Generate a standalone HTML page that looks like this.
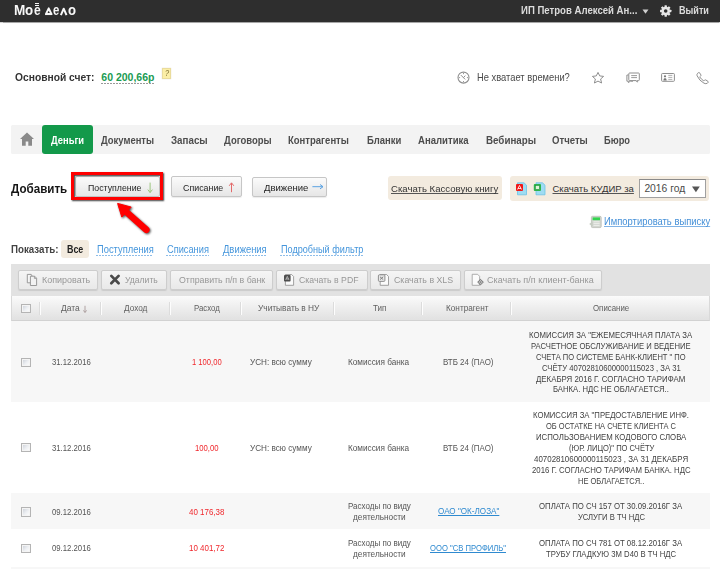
<!DOCTYPE html>
<html><head><meta charset="utf-8"><title>Моё дело</title>
<style>
html,body{margin:0;padding:0;background:#fff;width:720px;height:569px;overflow:hidden;position:relative;font-family:"Liberation Sans", sans-serif;}
.t{position:absolute;white-space:nowrap;text-decoration-skip-ink:none;}
</style></head><body>
<div style="position:absolute;left:0px;top:0px;width:720px;height:21.5px;background:#2e2e2e;box-shadow:0 0.5px 1px rgba(0,0,0,.35)"></div>
<div class="t" style="left:14.03px;top:3.10px;font-size:14px;line-height:14px;font-weight:700;color:#f7f7f7;letter-spacing:0px;transform:scaleX(0.9700);transform-origin:0 0;">М</div>
<div class="t" style="left:25.30px;top:3.10px;font-size:14px;line-height:14px;font-weight:700;color:#f7f7f7;letter-spacing:0px;transform:scaleX(0.9500);transform-origin:0 0;">о</div>
<div class="t" style="left:33.80px;top:3.10px;font-size:14px;line-height:14px;font-weight:700;color:#f7f7f7;letter-spacing:0px;transform:scaleX(0.8625);transform-origin:0 0;">е</div>
<div style="position:absolute;left:35.1px;top:3.1px;width:4px;height:1.1px;background:#f7f7f7"></div>
<div style="position:absolute;left:35.1px;top:5.2px;width:4px;height:1.1px;background:#f7f7f7"></div>
<svg style="position:absolute;left:42px;top:0" width="36" height="20" viewBox="42 0 36 20"><path d="M48.7 8.3 L46 14 L51.4 14 Z" fill="none" stroke="#f7f7f7" stroke-width="1.9" stroke-linejoin="round"/><path d="M45.1 14.4 H52.3" stroke="#f7f7f7" stroke-width="1.3"/><path d="M60.9 15.1 L63.7 8.7 L66.5 15.1" fill="none" stroke="#f7f7f7" stroke-width="2" stroke-linejoin="round"/></svg>
<div class="t" style="left:52.75px;top:3.10px;font-size:14px;line-height:14px;font-weight:700;color:#f7f7f7;letter-spacing:0px;transform:scaleX(0.8125);transform-origin:0 0;">е</div>
<div class="t" style="left:67.50px;top:3.10px;font-size:14px;line-height:14px;font-weight:700;color:#f7f7f7;letter-spacing:0px;transform:scaleX(0.9375);transform-origin:0 0;">о</div>
<div class="t" style="left:521.00px;top:6.00px;font-size:10px;line-height:10px;font-weight:700;color:#dcdcdc;letter-spacing:0px;transform:scaleX(0.9587);transform-origin:0 0;">ИП Петров Алексей Ан...</div>
<svg style="position:absolute;left:642px;top:9px" width="7" height="5" viewBox="0 0 7 5"><path d="M0.5 0.5 L6.5 0.5 L3.5 4.7 Z" fill="#cfcfcf"/></svg>
<svg style="position:absolute;left:658px;top:3px" width="16" height="16" viewBox="658 3 16 16"><g transform="translate(665.7 11)"><circle r="4.3" fill="#e6e6e6"/><rect x="-1.2" y="-5.7" width="2.4" height="2.4" rx="0.4" fill="#e6e6e6" transform="rotate(0)"/><rect x="-1.2" y="-5.7" width="2.4" height="2.4" rx="0.4" fill="#e6e6e6" transform="rotate(45)"/><rect x="-1.2" y="-5.7" width="2.4" height="2.4" rx="0.4" fill="#e6e6e6" transform="rotate(90)"/><rect x="-1.2" y="-5.7" width="2.4" height="2.4" rx="0.4" fill="#e6e6e6" transform="rotate(135)"/><rect x="-1.2" y="-5.7" width="2.4" height="2.4" rx="0.4" fill="#e6e6e6" transform="rotate(180)"/><rect x="-1.2" y="-5.7" width="2.4" height="2.4" rx="0.4" fill="#e6e6e6" transform="rotate(225)"/><rect x="-1.2" y="-5.7" width="2.4" height="2.4" rx="0.4" fill="#e6e6e6" transform="rotate(270)"/><rect x="-1.2" y="-5.7" width="2.4" height="2.4" rx="0.4" fill="#e6e6e6" transform="rotate(315)"/><circle r="1.8" fill="#2e2e2e"/></g></svg>
<div class="t" style="left:679.40px;top:6.00px;font-size:10px;line-height:10px;font-weight:700;color:#dcdcdc;letter-spacing:0px;transform:scaleX(0.9091);transform-origin:0 0;">Выйти</div>
<div class="t" style="left:15.00px;top:71.75px;font-size:10.5px;line-height:10.5px;font-weight:700;color:#333;letter-spacing:0px;transform:scaleX(0.9778);transform-origin:0 0;">Основной счет:</div>
<div class="t" style="left:101.30px;top:71.90px;font-size:10.5px;line-height:10.5px;font-weight:700;color:#1a9b52;letter-spacing:0px;">60 200,66р</div>
<div style="position:absolute;left:101px;top:83px;width:54px;height:1px;background:repeating-linear-gradient(90deg,#9a9a9a 0 2px,transparent 2px 3px)"></div>
<div style="position:absolute;left:161.7px;top:68.2px;width:9.3px;height:10.4px;background:#fbeea6;border:1px solid #eadc9c;box-sizing:border-box;box-shadow:0 0 1px rgba(150,130,60,.3)"></div>
<div class="t" style="left:164.70px;top:69.40px;font-size:9px;line-height:9px;font-weight:400;color:#85763a;letter-spacing:0px;transform:scaleX(0.8200);transform-origin:0 0;font-style:italic">?</div>
<svg style="position:absolute;left:454px;top:69px" width="20" height="18" viewBox="454 69 20 18"><circle cx="463.5" cy="77.6" r="5.5" fill="none" stroke="#8f8f8f" stroke-width="1.1"/><path d="M463.5 73 V74.2 M463.5 81 V82.2 M458.9 77.6 H460.1 M466.9 77.6 H468.1" stroke="#8f8f8f" stroke-width="0.9"/><path d="M460.9 75.1 L465.2 79.4 M463.5 77.6 L465.3 75.6" stroke="#8f8f8f" stroke-width="1"/></svg>
<div class="t" style="left:476.90px;top:72.80px;font-size:10.4px;line-height:10.4px;font-weight:400;color:#4a4a4a;letter-spacing:0px;transform:scaleX(0.9000);transform-origin:0 0;">Не хватает времени?</div>
<svg style="position:absolute;left:588px;top:69px" width="20" height="18" viewBox="588 69 20 18"><path d="M598 72.4 L599.7 75.9 L603.6 76.4 L600.6 79 L601.6 83 L598 81.1 L594.4 83 L595.4 79 L592.4 76.4 L596.3 75.9 Z" fill="none" stroke="#8f8f8f" stroke-width="1" stroke-linejoin="round"/></svg>
<svg style="position:absolute;left:622px;top:69px" width="22" height="18" viewBox="622 69 22 18"><path d="M628.6 75 H626.9 V81.2 L628.4 81.2 L628.4 82.6 L630.3 81.2 H633" fill="none" stroke="#8f8f8f" stroke-width="1"/><rect x="628.8" y="73" width="10.5" height="7.6" rx="0.8" fill="#fff" stroke="#8f8f8f" stroke-width="1"/><path d="M631.2 75.6 H637 M631.2 77.6 H637" stroke="#8f8f8f" stroke-width="0.9"/><path d="M635.8 80.6 L637.4 82.2 L637.4 80.6" fill="#fff" stroke="#8f8f8f" stroke-width="0.9"/></svg>
<svg style="position:absolute;left:658px;top:69px" width="22" height="18" viewBox="658 69 22 18"><rect x="661.6" y="73.5" width="12.8" height="7.8" rx="0.8" fill="none" stroke="#8f8f8f" stroke-width="1"/><circle cx="665" cy="76.3" r="1.1" fill="#777"/><path d="M663.3 80.6 Q663.5 77.9 665 77.9 Q666.6 77.9 666.7 80.6 Z" fill="#777"/><path d="M668.3 75.4 H672.3 M668.3 77.4 H672.3 M668.3 79.4 H672.3" stroke="#9a9a9a" stroke-width="0.8"/></svg>
<svg style="position:absolute;left:692px;top:69px" width="20" height="18" viewBox="692 69 20 18"><path d="M697.6 73.3 Q698.5 72.3 699.4 72.6 L700.9 74.9 Q701.2 75.6 700.4 76.3 L699.7 76.9 Q701.5 79.6 703.8 80.9 L704.5 80.2 Q705.2 79.6 705.9 80 L708.1 81.5 Q708.5 82.4 707.4 83.2 Q706 84.2 704 83.2 Q699.4 80.8 697.1 75.8 Q696.6 74.3 697.6 73.3 Z" fill="none" stroke="#8f8f8f" stroke-width="1" stroke-linejoin="round"/></svg>
<div style="position:absolute;left:11px;top:125.2px;width:698.6px;height:28.8px;background:#f3f3f3;border-radius:1.5px"></div>
<svg style="position:absolute;left:19px;top:132px" width="16" height="14" viewBox="0 0 16 14"><path d="M8 0.6 L15 7 L13 7 L13 13.8 L9.3 13.8 L9.3 9.5 L6.7 9.5 L6.7 13.8 L3 13.8 L3 7 L1 7 Z" fill="#8a8a8a"/></svg>
<div style="position:absolute;left:42px;top:125px;width:50.5px;height:29.25px;background:#13994a;border-radius:3px"></div>
<div class="t" style="left:51.00px;top:135.25px;font-size:10.5px;line-height:10.5px;font-weight:700;color:#ffffff;letter-spacing:0px;transform:scaleX(0.8919);transform-origin:0 0;">Деньги</div>
<div class="t" style="left:101.20px;top:134.90px;font-size:10.5px;line-height:10.5px;font-weight:700;color:#4d4d4d;letter-spacing:0px;transform:scaleX(0.8983);transform-origin:0 0;">Документы</div>
<div class="t" style="left:171.00px;top:134.90px;font-size:10.5px;line-height:10.5px;font-weight:700;color:#4d4d4d;letter-spacing:0px;transform:scaleX(0.9308);transform-origin:0 0;">Запасы</div>
<div class="t" style="left:224.00px;top:134.90px;font-size:10.5px;line-height:10.5px;font-weight:700;color:#4d4d4d;letter-spacing:0px;transform:scaleX(0.9038);transform-origin:0 0;">Договоры</div>
<div class="t" style="left:288.30px;top:134.90px;font-size:10.5px;line-height:10.5px;font-weight:700;color:#4d4d4d;letter-spacing:0px;transform:scaleX(0.9060);transform-origin:0 0;">Контрагенты</div>
<div class="t" style="left:366.70px;top:134.90px;font-size:10.5px;line-height:10.5px;font-weight:700;color:#4d4d4d;letter-spacing:0px;transform:scaleX(0.9026);transform-origin:0 0;">Бланки</div>
<div class="t" style="left:417.50px;top:134.90px;font-size:10.5px;line-height:10.5px;font-weight:700;color:#4d4d4d;letter-spacing:0px;transform:scaleX(0.9107);transform-origin:0 0;">Аналитика</div>
<div class="t" style="left:485.70px;top:134.90px;font-size:10.5px;line-height:10.5px;font-weight:700;color:#4d4d4d;letter-spacing:0px;transform:scaleX(0.9302);transform-origin:0 0;">Вебинары</div>
<div class="t" style="left:551.70px;top:134.90px;font-size:10.5px;line-height:10.5px;font-weight:700;color:#4d4d4d;letter-spacing:0px;transform:scaleX(0.9128);transform-origin:0 0;">Отчеты</div>
<div class="t" style="left:604.30px;top:134.90px;font-size:10.5px;line-height:10.5px;font-weight:700;color:#4d4d4d;letter-spacing:0px;transform:scaleX(0.8862);transform-origin:0 0;">Бюро</div>
<div class="t" style="left:10.50px;top:183.00px;font-size:12.5px;line-height:12.5px;font-weight:700;color:#151515;letter-spacing:0px;transform:scaleX(0.9292);transform-origin:0 0;">Добавить</div>
<div style="position:absolute;left:74.5px;top:175.5px;width:85.5px;height:21px;background:linear-gradient(#fbfbfb,#e6e6e6);border:1px solid #c6c6c6;box-sizing:border-box;border-radius:2px;box-shadow:0 1px 1px rgba(0,0,0,.08)"></div>
<div class="t" style="left:87.50px;top:183.90px;font-size:9.3px;line-height:9.3px;font-weight:400;color:#252525;letter-spacing:0px;transform:scaleX(0.9430);transform-origin:0 0;">Поступление</div>
<svg style="position:absolute;left:145px;top:180px" width="10" height="15" viewBox="145 180 10 15"><path d="M150.1 182.6 V192.4 M147.8 189.6 L150.1 192.6 L152.4 189.6" fill="none" stroke="#9cc77e" stroke-width="1"/></svg>
<div style="position:absolute;left:70.75px;top:172px;width:92.5px;height:27.5px;border:3.2px solid #f00;box-sizing:border-box;box-shadow:1px 1px 1.5px rgba(0,0,0,.75), inset 1px 1px 1.5px rgba(0,0,0,.75)"></div>
<div style="position:absolute;left:171px;top:176.25px;width:71.4px;height:21.05px;background:linear-gradient(#fbfbfb,#e6e6e6);border:1px solid #c6c6c6;box-sizing:border-box;border-radius:2px;box-shadow:0 1px 1px rgba(0,0,0,.08)"></div>
<div class="t" style="left:183.00px;top:183.90px;font-size:9.3px;line-height:9.3px;font-weight:400;color:#252525;letter-spacing:0px;transform:scaleX(0.9524);transform-origin:0 0;">Списание</div>
<svg style="position:absolute;left:226px;top:180px" width="10" height="15" viewBox="226 180 10 15"><path d="M231.5 183 V192.2 M229.2 185.8 L231.5 182.8 L233.8 185.8" fill="none" stroke="#e36a6a" stroke-width="1"/></svg>
<div style="position:absolute;left:252.3px;top:176.5px;width:74.9px;height:20.8px;background:linear-gradient(#fbfbfb,#e6e6e6);border:1px solid #c6c6c6;box-sizing:border-box;border-radius:2px;box-shadow:0 1px 1px rgba(0,0,0,.08)"></div>
<div class="t" style="left:264.30px;top:183.90px;font-size:9.3px;line-height:9.3px;font-weight:400;color:#252525;letter-spacing:0px;transform:scaleX(1.0233);transform-origin:0 0;">Движение</div>
<svg style="position:absolute;left:310px;top:182px" width="16" height="10" viewBox="310 182 16 10"><path d="M312.4 186.7 H322.8 M320 184.5 L323 186.7 L320 188.9" fill="none" stroke="#5aa2e2" stroke-width="1"/></svg>
<svg style="position:absolute;left:108px;top:196px;filter:drop-shadow(1.2px 1.2px 1px rgba(0,0,0,.7))" width="50" height="45" viewBox="108 196 50 45"><path d="M126.5 212.1 L146.3 229.8" stroke="#f00" stroke-width="6.6" stroke-linecap="round"/><path d="M117.6 203.4 L131.2 207.1 L121.8 217.1 Z" fill="#f00" stroke="#f00" stroke-width="1" stroke-linejoin="round"/></svg>
<div style="position:absolute;left:387.5px;top:176px;width:114.25px;height:23.75px;background:#f3ebdf;border-radius:3px"></div>
<div class="t" style="left:391.25px;top:184.00px;font-size:9.5px;line-height:9.5px;font-weight:400;color:#333;letter-spacing:0px;transform:scaleX(1.0094);transform-origin:0 0;text-decoration:underline #555">Скачать Кассовую книгу</div>
<div style="position:absolute;left:509.5px;top:176.2px;width:199.4px;height:24.6px;background:#f3ebdf;border-radius:3px"></div>
<svg style="position:absolute;left:515px;top:182px" width="13" height="14" viewBox="0 0 13 14"><path d="M2.5 0.8 H9 L11.5 3.2 V12.8 H2.5 Z" fill="#9fdcf2" stroke="#6cc3e6" stroke-width="0.8"/><rect x="1" y="2" width="7" height="7" rx="1" fill="#f01818"/><path d="M4.5 3.5 L6.5 7.5 M4.5 3.5 L2.5 7.5 M3 6.5 H6" stroke="#fff" stroke-width="0.8"/></svg>
<svg style="position:absolute;left:533px;top:182px" width="13" height="14" viewBox="0 0 13 14"><path d="M3 0.8 H9.5 L12 3.2 V12.8 H3 Z" fill="#9fdcf2" stroke="#6cc3e6" stroke-width="0.8"/><rect x="0.8" y="2" width="7.2" height="7" rx="1" fill="#2fb34a"/><rect x="2.3" y="3.5" width="4.2" height="4" fill="#dff5d8" stroke="#1f8f3a" stroke-width="0.6"/></svg>
<div class="t" style="left:552.50px;top:184.00px;font-size:9.5px;line-height:9.5px;font-weight:400;color:#333;letter-spacing:0px;text-decoration:underline #555">Скачать КУДИР за</div>
<div style="position:absolute;left:639.3px;top:179.1px;width:66.7px;height:19.3px;background:#fff;border:1px solid #a0a0a0;border-top-color:#8a8a8a;box-sizing:border-box"></div>
<div class="t" style="left:644.40px;top:184.40px;font-size:10.3px;line-height:10.3px;font-weight:400;color:#4a4a4a;letter-spacing:0px;">2016 год</div>
<svg style="position:absolute;left:690px;top:184px" width="12" height="10" viewBox="690 184 12 10"><path d="M692 186.4 H699.8 L695.9 192.3 Z" fill="#555"/></svg>
<svg style="position:absolute;left:587px;top:214px" width="16" height="16" viewBox="587 214 16 16"><rect x="591.4" y="216.3" width="9.8" height="11.3" rx="1.2" fill="#d3d6d0" stroke="#b9bdb5" stroke-width="0.8"/><rect x="592.6" y="217.4" width="7.4" height="2.8" fill="#33d44f"/><path d="M593.5 221.8 H599.6 M593.5 223.6 H599.6 M593.5 225.4 H599.6" stroke="#eef0ec" stroke-width="0.9"/><path d="M589.2 224 L592.6 221.6 L592.6 226.4 Z" fill="#c4cbc0"/></svg>
<div class="t" style="left:603.66px;top:216.90px;font-size:10px;line-height:10px;font-weight:400;color:#4590d8;letter-spacing:0px;transform:scaleX(0.9411);transform-origin:0 0;text-decoration:underline #80b3e6">Импортировать выписку</div>
<div class="t" style="left:11.10px;top:244.90px;font-size:10px;line-height:10px;font-weight:700;color:#444;letter-spacing:0px;transform:scaleX(0.9729);transform-origin:0 0;">Показать:</div>
<div style="position:absolute;left:61px;top:240.4px;width:27.75px;height:18.1px;background:#f3ebdf;border-radius:3px"></div>
<div class="t" style="left:66.70px;top:243.50px;font-size:10.5px;line-height:10.5px;font-weight:700;color:#222;letter-spacing:0px;transform:scaleX(0.8474);transform-origin:0 0;">Все</div>
<div class="t" style="left:96.70px;top:244.90px;font-size:10px;line-height:10px;font-weight:400;color:#4596dc;letter-spacing:0px;transform:scaleX(0.9350);transform-origin:0 0;">Поступления</div>
<div style="position:absolute;left:96.2px;top:255px;width:57.1px;height:1px;background:repeating-linear-gradient(90deg,#8dbde9 0 2px,transparent 2px 3px)"></div>
<div class="t" style="left:166.70px;top:244.90px;font-size:10px;line-height:10px;font-weight:400;color:#4596dc;letter-spacing:0px;transform:scaleX(0.9244);transform-origin:0 0;">Списания</div>
<div style="position:absolute;left:166.2px;top:255px;width:42.6px;height:1px;background:repeating-linear-gradient(90deg,#8dbde9 0 2px,transparent 2px 3px)"></div>
<div class="t" style="left:222.80px;top:244.90px;font-size:10px;line-height:10px;font-weight:400;color:#4596dc;letter-spacing:0px;transform:scaleX(0.9413);transform-origin:0 0;">Движения</div>
<div style="position:absolute;left:222.3px;top:255px;width:44.3px;height:1px;background:repeating-linear-gradient(90deg,#8dbde9 0 2px,transparent 2px 3px)"></div>
<div class="t" style="left:280.60px;top:244.90px;font-size:10px;line-height:10px;font-weight:400;color:#4596dc;letter-spacing:0px;transform:scaleX(0.9100);transform-origin:0 0;">Подробный фильтр</div>
<div style="position:absolute;left:280.1px;top:255px;width:82.9px;height:1px;background:repeating-linear-gradient(90deg,#8dbde9 0 2px,transparent 2px 3px)"></div>
<div style="position:absolute;left:11px;top:263.5px;width:699px;height:32.5px;background:#e2e2e2"></div>
<div style="position:absolute;left:18.1px;top:269.5px;width:79.9px;height:20px;background:linear-gradient(#f5f5f5,#e9e9e9);border:1px solid #cdcdcd;box-sizing:border-box;border-radius:2px;box-shadow:0 1px 1px rgba(0,0,0,.1)"></div>
<div style="position:absolute;left:101.3px;top:269.5px;width:65.35px;height:20px;background:linear-gradient(#f5f5f5,#e9e9e9);border:1px solid #cdcdcd;box-sizing:border-box;border-radius:2px;box-shadow:0 1px 1px rgba(0,0,0,.1)"></div>
<div style="position:absolute;left:170.2px;top:269.5px;width:102.7px;height:20px;background:linear-gradient(#f5f5f5,#e9e9e9);border:1px solid #cdcdcd;box-sizing:border-box;border-radius:2px;box-shadow:0 1px 1px rgba(0,0,0,.1)"></div>
<div style="position:absolute;left:276.3px;top:269.5px;width:91.3px;height:20px;background:linear-gradient(#f5f5f5,#e9e9e9);border:1px solid #cdcdcd;box-sizing:border-box;border-radius:2px;box-shadow:0 1px 1px rgba(0,0,0,.1)"></div>
<div style="position:absolute;left:370.4px;top:269.5px;width:90.6px;height:20px;background:linear-gradient(#f5f5f5,#e9e9e9);border:1px solid #cdcdcd;box-sizing:border-box;border-radius:2px;box-shadow:0 1px 1px rgba(0,0,0,.1)"></div>
<div style="position:absolute;left:464.2px;top:269.5px;width:137.9px;height:20px;background:linear-gradient(#f5f5f5,#e9e9e9);border:1px solid #cdcdcd;box-sizing:border-box;border-radius:2px;box-shadow:0 1px 1px rgba(0,0,0,.1)"></div>
<svg style="position:absolute;left:24px;top:272px" width="16" height="16" viewBox="24 272 16 16"><path d="M27.3 274.4 H31.2 L31.8 275 V282.8 H27.3 Z" fill="#f6f6f6" stroke="#8f8f8f" stroke-width="0.9"/><path d="M30.4 276.2 H34.6 L36.6 278.2 V285.5 H30.4 Z" fill="#f2f2f2" stroke="#8f8f8f" stroke-width="0.9"/><path d="M34.4 276.4 V278.4 H36.4" fill="none" stroke="#8f8f8f" stroke-width="0.8"/></svg>
<div class="t" style="left:41.50px;top:275.80px;font-size:9.3px;line-height:9.3px;font-weight:400;color:#979797;letter-spacing:0px;transform:scaleX(0.9640);transform-origin:0 0;">Копировать</div>
<svg style="position:absolute;left:107px;top:272px" width="16" height="16" viewBox="107 272 16 16"><path d="M111.3 275.9 L118.6 283.3 M118.6 275.9 L111.3 283.3" stroke="#4a4a4a" stroke-width="2.7" stroke-linecap="round"/></svg>
<div class="t" style="left:124.70px;top:275.80px;font-size:9.3px;line-height:9.3px;font-weight:400;color:#979797;letter-spacing:0px;transform:scaleX(0.9250);transform-origin:0 0;">Удалить</div>
<div class="t" style="left:178.75px;top:275.80px;font-size:9.3px;line-height:9.3px;font-weight:400;color:#979797;letter-spacing:0px;transform:scaleX(0.9478);transform-origin:0 0;">Отправить п/п в банк</div>
<svg style="position:absolute;left:282px;top:272px" width="14" height="16" viewBox="282 272 14 16"><path d="M285.4 274.5 H291.6 L293.6 276.5 V285.3 H285.4 Z" fill="#fbfbfb" stroke="#8c8c8c" stroke-width="0.8"/><rect x="284" y="274.9" width="6.6" height="6.7" rx="1" fill="#4e4e4e"/><path d="M287.3 276.4 L288.9 279.8 M287.3 276.4 L285.7 279.8 M286.2 279 H288.5" stroke="#d8d8d8" stroke-width="0.7" fill="none"/></svg>
<div class="t" style="left:299.40px;top:275.80px;font-size:9.3px;line-height:9.3px;font-weight:400;color:#979797;letter-spacing:0px;transform:scaleX(0.9359);transform-origin:0 0;">Скачать в PDF</div>
<svg style="position:absolute;left:376px;top:272px" width="14" height="16" viewBox="376 272 14 16"><path d="M380.2 274.5 H386.6 L388.5 276.5 V285.3 H380.2 Z" fill="#fbfbfb" stroke="#8c8c8c" stroke-width="0.8"/><rect x="378.4" y="274.8" width="6.5" height="6.6" rx="1" fill="#e8e8e8" stroke="#858585" stroke-width="0.9"/><path d="M380 276.8 L383.2 279.6 M383.2 276.8 L380 279.6" stroke="#777" stroke-width="0.9"/></svg>
<div class="t" style="left:394.20px;top:275.80px;font-size:9.3px;line-height:9.3px;font-weight:400;color:#979797;letter-spacing:0px;transform:scaleX(0.9452);transform-origin:0 0;">Скачать в XLS</div>
<svg style="position:absolute;left:469px;top:272px" width="16" height="16" viewBox="469 272 16 16"><path d="M472.2 274.3 H477.6 L479.6 276.3 V285.3 H472.2 Z" fill="#fbfbfb" stroke="#9a9a9a" stroke-width="0.8"/><path d="M480.5 279.3 L483.3 282.1 L480.5 284.9 L477.7 282.1 Z" fill="#bdbdbd" stroke="#666" stroke-width="0.9"/><circle cx="480.5" cy="282.1" r="0.9" fill="#888"/></svg>
<div class="t" style="left:487.00px;top:275.80px;font-size:9.3px;line-height:9.3px;font-weight:400;color:#979797;letter-spacing:0px;transform:scaleX(0.9705);transform-origin:0 0;">Скачать п/п клиент-банка</div>
<div style="position:absolute;left:11px;top:296px;width:699px;height:25px;background:linear-gradient(#fbfbfb,#f4f4f4 25%,#e2e2e2 95%);border:1px solid #d9d9d9;border-top:0;border-bottom-color:#d2d2d2;box-sizing:border-box"></div>
<div style="position:absolute;left:21.25px;top:303.75px;width:9.5px;height:9.25px;background:linear-gradient(135deg,#c8cdd6 0%,#eef0f3 55%,#fff 100%);border:1px solid #b4b4b4;box-shadow:inset 0 0 0 1px #f4f4f4;box-sizing:border-box"></div>
<div style="position:absolute;left:39px;top:301.5px;width:2px;height:13.5px;border-left:1px solid #dcdcdc;border-right:1px solid #fdfdfd;box-sizing:border-box"></div>
<div style="position:absolute;left:99.5px;top:301.5px;width:2px;height:13.5px;border-left:1px solid #dcdcdc;border-right:1px solid #fdfdfd;box-sizing:border-box"></div>
<div style="position:absolute;left:169px;top:301.5px;width:2px;height:13.5px;border-left:1px solid #dcdcdc;border-right:1px solid #fdfdfd;box-sizing:border-box"></div>
<div style="position:absolute;left:240.25px;top:301.5px;width:2px;height:13.5px;border-left:1px solid #dcdcdc;border-right:1px solid #fdfdfd;box-sizing:border-box"></div>
<div style="position:absolute;left:332.5px;top:301.5px;width:2px;height:13.5px;border-left:1px solid #dcdcdc;border-right:1px solid #fdfdfd;box-sizing:border-box"></div>
<div style="position:absolute;left:421.25px;top:301.5px;width:2px;height:13.5px;border-left:1px solid #dcdcdc;border-right:1px solid #fdfdfd;box-sizing:border-box"></div>
<div style="position:absolute;left:510.25px;top:301.5px;width:2px;height:13.5px;border-left:1px solid #dcdcdc;border-right:1px solid #fdfdfd;box-sizing:border-box"></div>
<div class="t" style="left:60.80px;top:303.90px;font-size:8.5px;line-height:8.5px;font-weight:400;color:#606060;letter-spacing:0px;transform:scaleX(0.9947);transform-origin:0 0;">Дата</div>
<svg style="position:absolute;left:82px;top:304px" width="6" height="10" viewBox="82 304 6 10"><path d="M85 305.8 V312.3 M83.4 310.4 L85 312.5 L86.6 310.4" fill="none" stroke="#a89a9a" stroke-width="0.9"/></svg>
<div class="t" style="left:124.25px;top:303.90px;font-size:8.5px;line-height:8.5px;font-weight:400;color:#606060;letter-spacing:0px;transform:scaleX(0.9688);transform-origin:0 0;">Доход</div>
<div class="t" style="left:193.75px;top:303.90px;font-size:8.5px;line-height:8.5px;font-weight:400;color:#606060;letter-spacing:0px;transform:scaleX(0.9196);transform-origin:0 0;">Расход</div>
<div class="t" style="left:257.50px;top:303.90px;font-size:8.5px;line-height:8.5px;font-weight:400;color:#606060;letter-spacing:0px;transform:scaleX(0.9802);transform-origin:0 0;">Учитывать в НУ</div>
<div class="t" style="left:372.50px;top:303.90px;font-size:8.5px;line-height:8.5px;font-weight:400;color:#606060;letter-spacing:0px;transform:scaleX(0.9464);transform-origin:0 0;">Тип</div>
<div class="t" style="left:446.25px;top:303.90px;font-size:8.5px;line-height:8.5px;font-weight:400;color:#606060;letter-spacing:0px;transform:scaleX(0.9659);transform-origin:0 0;">Контрагент</div>
<div class="t" style="left:592.80px;top:303.90px;font-size:8.5px;line-height:8.5px;font-weight:400;color:#606060;letter-spacing:0px;transform:scaleX(0.9256);transform-origin:0 0;">Описание</div>
<div style="position:absolute;left:11px;top:320.5px;width:699px;height:81.8px;background:#f7f7f7"></div>
<div style="position:absolute;left:11px;top:493.3px;width:699px;height:36.2px;background:#f7f7f7"></div>
<div style="position:absolute;left:11px;top:567px;width:699px;height:2px;background:#f7f7f7"></div>
<div style="position:absolute;left:21px;top:357.65px;width:10px;height:9.3px;background:linear-gradient(135deg,#c8cdd6 0%,#eef0f3 55%,#fff 100%);border:1px solid #b4b4b4;box-shadow:inset 0 0 0 1px #f4f4f4;box-sizing:border-box"></div>
<div class="t" style="left:51.90px;top:357.90px;font-size:9px;line-height:9px;font-weight:400;color:#555;letter-spacing:0px;transform:scaleX(0.8600);transform-origin:0 0;">31.12.2016</div>
<div class="t" style="left:192.10px;top:358.20px;font-size:9px;line-height:9px;font-weight:400;color:#f0282d;letter-spacing:0px;transform:scaleX(0.8486);transform-origin:0 0;">1 100,00</div>
<div class="t" style="left:249.60px;top:358.20px;font-size:9px;line-height:9px;font-weight:400;color:#555;letter-spacing:0px;transform:scaleX(0.9074);transform-origin:0 0;">УСН: всю сумму</div>
<div class="t" style="left:348.00px;top:358.20px;font-size:9px;line-height:9px;font-weight:400;color:#555;letter-spacing:0px;transform:scaleX(0.9134);transform-origin:0 0;">Комиссия банка</div>
<div class="t" style="left:442.60px;top:358.20px;font-size:9px;line-height:9px;font-weight:400;color:#555;letter-spacing:0px;transform:scaleX(0.8842);transform-origin:0 0;">ВТБ 24 (ПАО)</div>
<div class="t" style="left:528.50px;top:331.20px;font-size:8.5px;line-height:8.5px;font-weight:400;color:#424242;letter-spacing:0px;transform:scaleX(0.9145);transform-origin:0 0;">КОМИССИЯ ЗА &quot;ЕЖЕМЕСЯЧНАЯ ПЛАТА ЗА</div>
<div class="t" style="left:530.90px;top:342.00px;font-size:8.5px;line-height:8.5px;font-weight:400;color:#424242;letter-spacing:0px;transform:scaleX(0.9006);transform-origin:0 0;">РАСЧЕТНОЕ ОБСЛУЖИВАНИЕ И ВЕДЕНИЕ</div>
<div class="t" style="left:536.30px;top:353.00px;font-size:8.5px;line-height:8.5px;font-weight:400;color:#424242;letter-spacing:0px;transform:scaleX(0.8887);transform-origin:0 0;">СЧЕТА ПО СИСТЕМЕ БАНК-КЛИЕНТ &quot; ПО</div>
<div class="t" style="left:541.50px;top:363.60px;font-size:8.5px;line-height:8.5px;font-weight:400;color:#424242;letter-spacing:0px;transform:scaleX(0.9019);transform-origin:0 0;">СЧЁТУ 40702810600000115023 , ЗА 31</div>
<div class="t" style="left:536.30px;top:374.70px;font-size:8.5px;line-height:8.5px;font-weight:400;color:#424242;letter-spacing:0px;transform:scaleX(0.9242);transform-origin:0 0;">ДЕКАБРЯ 2016 Г. СОГЛАСНО ТАРИФАМ</div>
<div class="t" style="left:552.90px;top:385.30px;font-size:8.5px;line-height:8.5px;font-weight:400;color:#424242;letter-spacing:0px;transform:scaleX(0.9039);transform-origin:0 0;">БАНКА. НДС НЕ ОБЛАГАЕТСЯ..</div>
<div style="position:absolute;left:21px;top:443.15px;width:10px;height:9.3px;background:linear-gradient(135deg,#c8cdd6 0%,#eef0f3 55%,#fff 100%);border:1px solid #b4b4b4;box-shadow:inset 0 0 0 1px #f4f4f4;box-sizing:border-box"></div>
<div class="t" style="left:51.90px;top:443.60px;font-size:9px;line-height:9px;font-weight:400;color:#555;letter-spacing:0px;transform:scaleX(0.8600);transform-origin:0 0;">31.12.2016</div>
<div class="t" style="left:195.00px;top:443.90px;font-size:9px;line-height:9px;font-weight:400;color:#f0282d;letter-spacing:0px;transform:scaleX(0.8571);transform-origin:0 0;">100,00</div>
<div class="t" style="left:249.60px;top:443.90px;font-size:9px;line-height:9px;font-weight:400;color:#555;letter-spacing:0px;transform:scaleX(0.9074);transform-origin:0 0;">УСН: всю сумму</div>
<div class="t" style="left:348.00px;top:443.90px;font-size:9px;line-height:9px;font-weight:400;color:#555;letter-spacing:0px;transform:scaleX(0.9134);transform-origin:0 0;">Комиссия банка</div>
<div class="t" style="left:442.60px;top:443.90px;font-size:9px;line-height:9px;font-weight:400;color:#555;letter-spacing:0px;transform:scaleX(0.8842);transform-origin:0 0;">ВТБ 24 (ПАО)</div>
<div class="t" style="left:532.60px;top:411.20px;font-size:8.5px;line-height:8.5px;font-weight:400;color:#424242;letter-spacing:0px;transform:scaleX(0.9058);transform-origin:0 0;">КОМИССИЯ ЗА &quot;ПРЕДОСТАВЛЕНИЕ ИНФ.</div>
<div class="t" style="left:545.80px;top:422.30px;font-size:8.5px;line-height:8.5px;font-weight:400;color:#424242;letter-spacing:0px;transform:scaleX(0.8830);transform-origin:0 0;">ОБ ОСТАТКЕ НА СЧЕТЕ КЛИЕНТА С</div>
<div class="t" style="left:536.30px;top:433.40px;font-size:8.5px;line-height:8.5px;font-weight:400;color:#424242;letter-spacing:0px;transform:scaleX(0.9171);transform-origin:0 0;">ИСПОЛЬЗОВАНИЕМ КОДОВОГО СЛОВА</div>
<div class="t" style="left:568.70px;top:444.00px;font-size:8.5px;line-height:8.5px;font-weight:400;color:#424242;letter-spacing:0px;transform:scaleX(0.8927);transform-origin:0 0;">(ЮР. ЛИЦО)&quot; ПО СЧЁТУ</div>
<div class="t" style="left:534.00px;top:454.70px;font-size:8.5px;line-height:8.5px;font-weight:400;color:#424242;letter-spacing:0px;transform:scaleX(0.9327);transform-origin:0 0;">40702810600000115023 , ЗА 31 ДЕКАБРЯ</div>
<div class="t" style="left:531.60px;top:465.80px;font-size:8.5px;line-height:8.5px;font-weight:400;color:#424242;letter-spacing:0px;transform:scaleX(0.9173);transform-origin:0 0;">2016 Г. СОГЛАСНО ТАРИФАМ БАНКА. НДС</div>
<div class="t" style="left:578.10px;top:476.60px;font-size:8.5px;line-height:8.5px;font-weight:400;color:#424242;letter-spacing:0px;transform:scaleX(0.8813);transform-origin:0 0;">НЕ ОБЛАГАЕТСЯ..</div>
<div style="position:absolute;left:21px;top:507.35px;width:10px;height:9.3px;background:linear-gradient(135deg,#c8cdd6 0%,#eef0f3 55%,#fff 100%);border:1px solid #b4b4b4;box-shadow:inset 0 0 0 1px #f4f4f4;box-sizing:border-box"></div>
<div class="t" style="left:51.90px;top:507.60px;font-size:9px;line-height:9px;font-weight:400;color:#555;letter-spacing:0px;transform:scaleX(0.8600);transform-origin:0 0;">09.12.2016</div>
<div class="t" style="left:189.00px;top:507.90px;font-size:9px;line-height:9px;font-weight:400;color:#f0282d;letter-spacing:0px;transform:scaleX(0.8825);transform-origin:0 0;">40 176,38</div>
<div class="t" style="left:347.60px;top:502.30px;font-size:9px;line-height:9px;font-weight:400;color:#555;letter-spacing:0px;transform:scaleX(0.8901);transform-origin:0 0;">Расходы по виду</div>
<div class="t" style="left:352.90px;top:512.90px;font-size:9px;line-height:9px;font-weight:400;color:#555;letter-spacing:0px;transform:scaleX(0.9175);transform-origin:0 0;">деятельности</div>
<div class="t" style="left:437.50px;top:507.00px;font-size:9px;line-height:9px;font-weight:400;color:#2f8ad0;letter-spacing:0px;transform:scaleX(0.9007);transform-origin:0 0;text-decoration:underline">ОАО &quot;ОК-ЛОЗА&quot;</div>
<div class="t" style="left:539.30px;top:502.30px;font-size:8.5px;line-height:8.5px;font-weight:400;color:#424242;letter-spacing:0px;transform:scaleX(0.9160);transform-origin:0 0;">ОПЛАТА ПО СЧ 157 ОТ 30.09.2016Г ЗА</div>
<div class="t" style="left:577.80px;top:513.20px;font-size:8.5px;line-height:8.5px;font-weight:400;color:#424242;letter-spacing:0px;transform:scaleX(0.8973);transform-origin:0 0;">УСЛУГИ В ТЧ НДС</div>
<div style="position:absolute;left:21px;top:543.75px;width:10px;height:9.3px;background:linear-gradient(135deg,#c8cdd6 0%,#eef0f3 55%,#fff 100%);border:1px solid #b4b4b4;box-shadow:inset 0 0 0 1px #f4f4f4;box-sizing:border-box"></div>
<div class="t" style="left:51.90px;top:544.00px;font-size:9px;line-height:9px;font-weight:400;color:#555;letter-spacing:0px;transform:scaleX(0.8600);transform-origin:0 0;">09.12.2016</div>
<div class="t" style="left:189.00px;top:544.30px;font-size:9px;line-height:9px;font-weight:400;color:#f0282d;letter-spacing:0px;transform:scaleX(0.8825);transform-origin:0 0;">10 401,72</div>
<div class="t" style="left:347.60px;top:539.20px;font-size:9px;line-height:9px;font-weight:400;color:#555;letter-spacing:0px;transform:scaleX(0.8901);transform-origin:0 0;">Расходы по виду</div>
<div class="t" style="left:352.90px;top:549.90px;font-size:9px;line-height:9px;font-weight:400;color:#555;letter-spacing:0px;transform:scaleX(0.9175);transform-origin:0 0;">деятельности</div>
<div class="t" style="left:430.25px;top:543.90px;font-size:9px;line-height:9px;font-weight:400;color:#2f8ad0;letter-spacing:0px;transform:scaleX(0.8511);transform-origin:0 0;text-decoration:underline">ООО &quot;СВ ПРОФИЛЬ&quot;</div>
<div class="t" style="left:539.30px;top:539.10px;font-size:8.5px;line-height:8.5px;font-weight:400;color:#424242;letter-spacing:0px;transform:scaleX(0.9160);transform-origin:0 0;">ОПЛАТА ПО СЧ 781 ОТ 08.12.2016Г ЗА</div>
<div class="t" style="left:546.00px;top:550.00px;font-size:8.5px;line-height:8.5px;font-weight:400;color:#424242;letter-spacing:0px;transform:scaleX(0.9063);transform-origin:0 0;">ТРУБУ ГЛАДКУЮ 3М D40 В ТЧ НДС</div>
</body></html>
